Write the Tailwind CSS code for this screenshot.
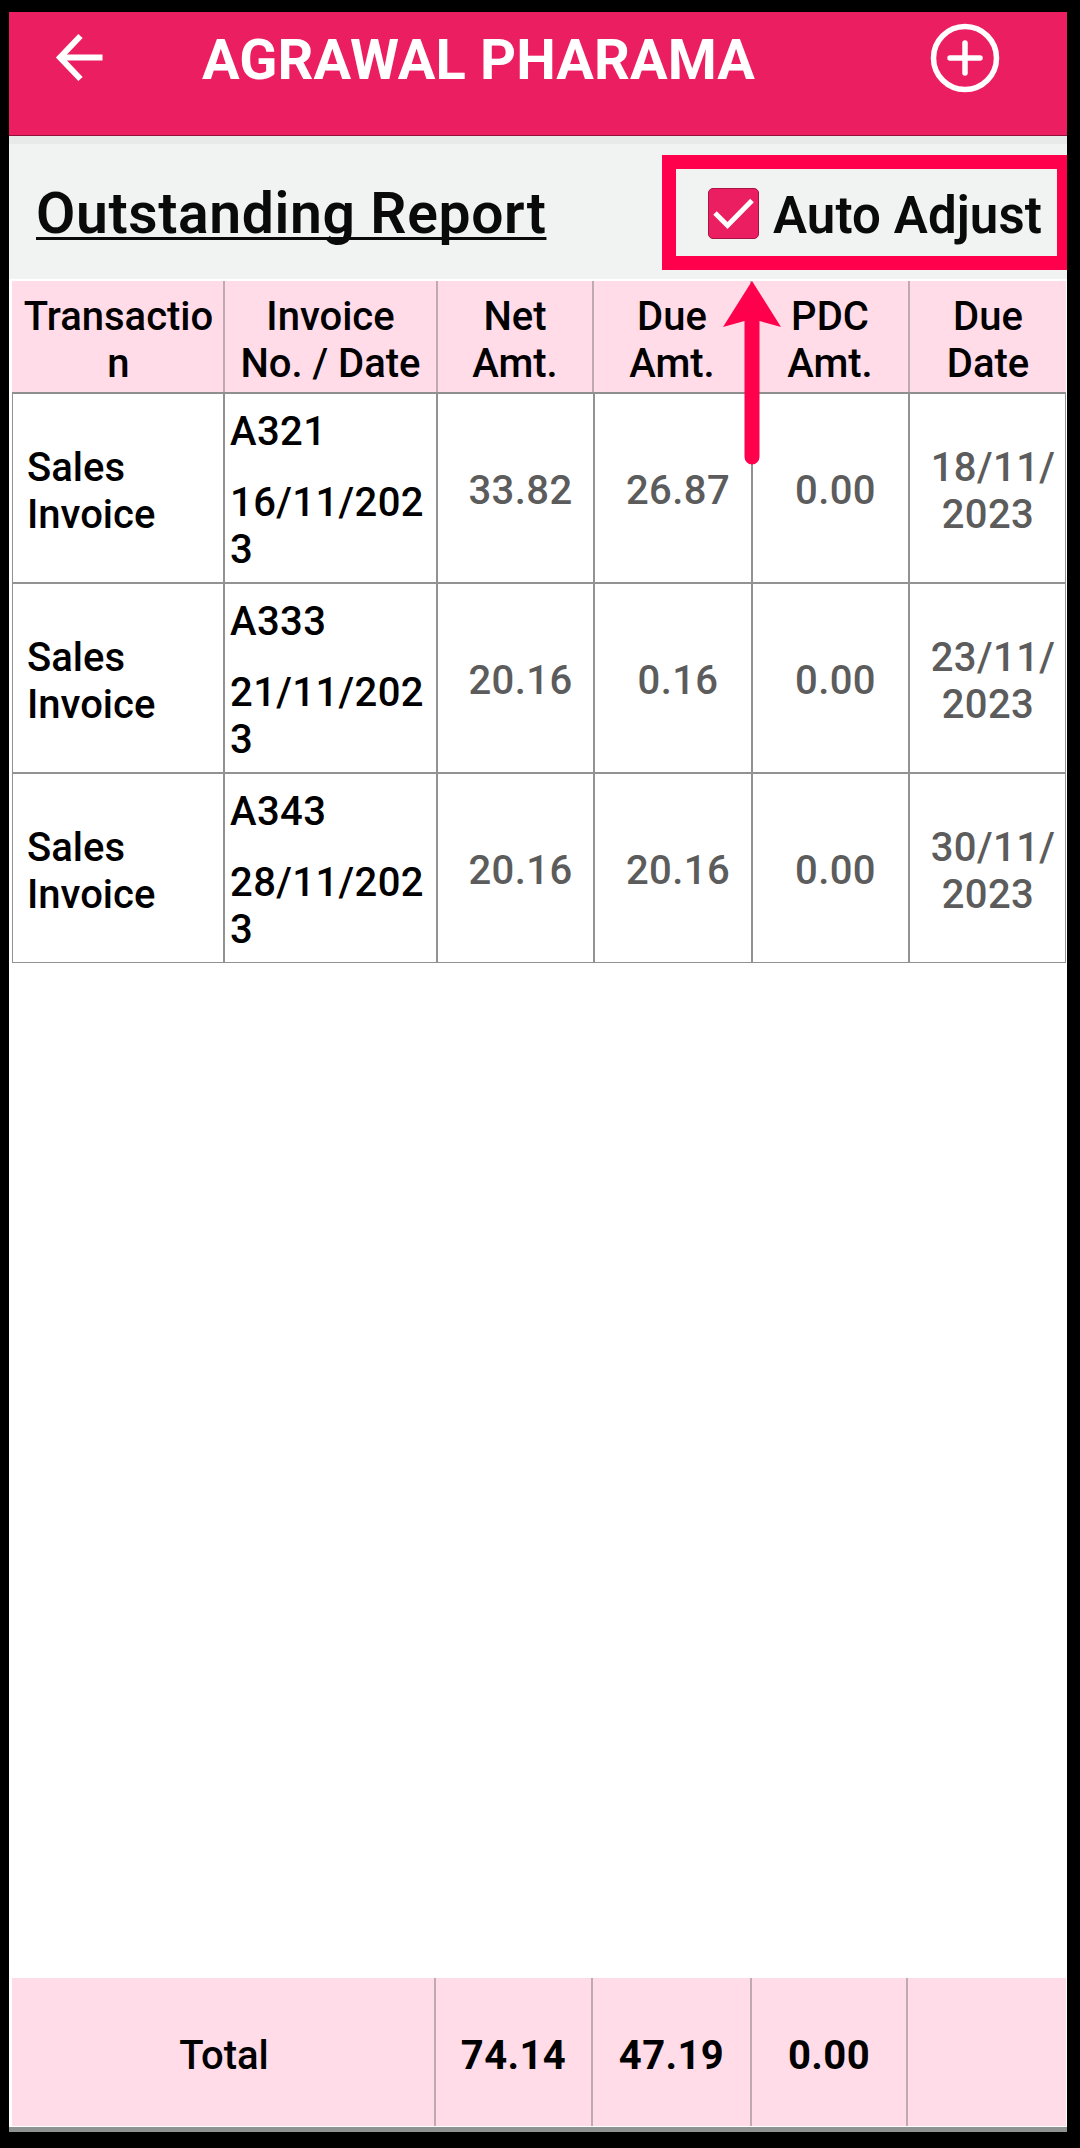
<!DOCTYPE html>
<html lang="en">
  <head>
    <meta charset="UTF-8" />
    <meta name="viewport" content="width=device-width, initial-scale=1.0" />
    <title>Outstanding Report</title>
    <script src="https://cdn.jsdelivr.net/npm/@tailwindcss/browser@4"></script>
  </head>
  <body class="bg-black font-['Roboto','Liberation_Sans',sans-serif] text-[40px] leading-[47px] font-medium tracking-[0px] text-black">
    <div class="w-[1080px] h-[2148px] pt-3 pb-4 pl-[9px] pr-[13px]">
      <div class="relative h-full bg-white flex flex-col overflow-hidden">
        <!-- App bar -->
        <header class="h-[124px] shrink-0 bg-[#ec1e62] border-b border-[#8f1038] flex items-start text-white">
          <svg class="mt-[20px] ml-[45px] size-[52px]" viewBox="0 0 52 52" fill="none" stroke="currentColor" stroke-width="6">
            <path d="M26.500 4 L6 25.500 L26.500 47 M6 25.500 H48.500" />
          </svg>
          <h1 class="ml-[96px] mt-[14px] w-[560px] whitespace-nowrap text-[56px] leading-[68px] font-bold tracking-[0.1px]">AGRAWAL PHARAMA</h1>
          <svg class="ml-[167px] mt-[10px] size-[72px]" viewBox="0 0 72 72" fill="none" stroke="currentColor" stroke-width="5.500" stroke-linecap="round">
            <circle cx="36" cy="36" r="31.500" />
            <path d="M36 21 V51 M21 36 H51" />
          </svg>
        </header>

        <!-- Report title and option -->
        <section class="h-[143px] shrink-0 bg-[#f1f3f3] flex items-start justify-between border-t-8 border-[#e8eaea] text-[#0a0a0a]">
          <h2 class="ml-[27px] mt-[36px] text-[57px] leading-[68px] font-semibold tracking-[0.65px] whitespace-nowrap underline decoration-[3px] underline-offset-[4px] [text-decoration-skip-ink:none]">Outstanding Report</h2>
          <label class="mt-[11px] w-[405px] h-[115px] shrink-0 border-[14px] border-r-[10px] border-[#ff004d] flex items-start">
            <span class="ml-[32px] mt-[19px] size-[51px] shrink-0 rounded-[5px] bg-[#ec1e62] border border-[#a81245] flex items-center justify-center">
              <svg class="size-[45px]" viewBox="0 0 45 45" fill="none" stroke="#fff" stroke-width="5">
                <path d="M4 22 L16.500 34.500 L41 9.500" />
              </svg>
            </span>
            <span class="ml-[14px] mt-[17px] text-[51px] leading-[60px] font-semibold tracking-[0.1px] whitespace-nowrap">Auto Adjust</span>
          </label>
        </section>

        <!-- Invoice table -->
        <div class="mt-[2px] ml-[3px] w-[1054px]">
          <div class="h-[113px] grid grid-cols-[213px_213px_156px_158px_158px_156px] bg-[#ffdce7] border-b-2 border-[#8f8f8f] text-center divide-x-2 divide-[#bfaab2]">
            <div class="pt-[12px] pl-[2px]">Transactio<br />n</div>
            <div class="pt-[12px]">Invoice<br />No. / Date</div>
            <div class="pt-[12px]">Net<br />Amt.</div>
            <div class="pt-[12px]">Due<br />Amt.</div>
            <div class="pt-[12px]">PDC<br />Amt.</div>
            <div class="pt-[12px]">Due<br />Date</div>
          </div>

          <div class="h-[190px] grid grid-cols-[212px_213px_157px_158px_157px_155px] items-stretch border-x border-b-2 border-[#929292] divide-x-2 divide-[#929292] text-center">
            <div class="pl-[14px] pt-[50px] text-left">Sales<br />Invoice</div>
            <div class="pl-[5px] pt-[14px] text-left tracking-[0.4px]"><p>A321</p><p class="mt-[24px]">16/11/202<br />3</p></div>
            <div class="pl-[10px] pt-[73px] tracking-[0.4px] text-[#5c5c5c]">33.82</div>
            <div class="pl-[10px] pt-[73px] tracking-[0.4px] text-[#5c5c5c]">26.87</div>
            <div class="pl-[10px] pt-[73px] tracking-[0.4px] text-[#5c5c5c]">0.00</div>
            <div class="pt-[50px] pl-px tracking-[0.4px] text-[#5c5c5c]"><span class="pl-[10px]">18/11/</span><br />2023</div>
          </div>

          <div class="h-[190px] grid grid-cols-[212px_213px_157px_158px_157px_155px] items-stretch border-x border-b-2 border-[#929292] divide-x-2 divide-[#929292] text-center">
            <div class="pl-[14px] pt-[50px] text-left">Sales<br />Invoice</div>
            <div class="pl-[5px] pt-[14px] text-left tracking-[0.4px]"><p>A333</p><p class="mt-[24px]">21/11/202<br />3</p></div>
            <div class="pl-[10px] pt-[73px] tracking-[0.4px] text-[#5c5c5c]">20.16</div>
            <div class="pl-[10px] pt-[73px] tracking-[0.4px] text-[#5c5c5c]">0.16</div>
            <div class="pl-[10px] pt-[73px] tracking-[0.4px] text-[#5c5c5c]">0.00</div>
            <div class="pt-[50px] pl-px tracking-[0.4px] text-[#5c5c5c]"><span class="pl-[10px]">23/11/</span><br />2023</div>
          </div>

          <div class="h-[189px] grid grid-cols-[212px_213px_157px_158px_157px_155px] items-stretch border-x border-b border-[#929292] divide-x-2 divide-[#929292] text-center">
            <div class="pl-[14px] pt-[50px] text-left">Sales<br />Invoice</div>
            <div class="pl-[5px] pt-[14px] text-left tracking-[0.4px]"><p>A343</p><p class="mt-[24px]">28/11/202<br />3</p></div>
            <div class="pl-[10px] pt-[73px] tracking-[0.4px] text-[#5c5c5c]">20.16</div>
            <div class="pl-[10px] pt-[73px] tracking-[0.4px] text-[#5c5c5c]">20.16</div>
            <div class="pl-[10px] pt-[73px] tracking-[0.4px] text-[#5c5c5c]">0.00</div>
            <div class="pt-[50px] pl-px tracking-[0.4px] text-[#5c5c5c]"><span class="pl-[10px]">30/11/</span><br />2023</div>
          </div>
        </div>

        <!-- Totals -->
        <footer class="mt-auto h-[154px] pl-[3px] pr-px border-b-[5px] border-[#8f9391]">
          <div class="h-[148px] grid grid-cols-[424px_157px_159px_156px_158px] bg-[#ffdce7] divide-x-2 divide-[#bfaab2] text-center font-bold tracking-[0.4px]">
            <div class="pt-[54px] pl-[2px] font-medium tracking-[0px]">Total</div>
            <div class="pt-[54px]">74.14</div>
            <div class="pt-[54px]">47.19</div>
            <div class="pt-[54px]">0.00</div>
            <div></div>
          </div>
        </footer>

        <!-- Pointer to the checkbox -->
        <svg class="absolute left-[714px] top-[269px] w-[58px] h-[184px]" viewBox="0 0 58 184" fill="#ff004d">
          <path d="M29 0 L58 46 L36.500 40 V176 A7.500 7.500 0 0 1 21.500 176 V40 L0 46 Z" />
        </svg>
      </div>
    </div>
  </body>
</html>
